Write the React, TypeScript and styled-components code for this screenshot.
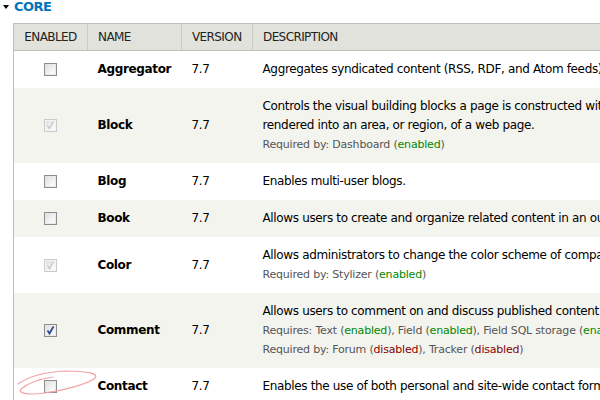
import styled, { createGlobalStyle } from "styled-components";

const GlobalStyle = createGlobalStyle`
    html, body {
        margin: 0;
        padding: 0;
        background: #fff;
        overflow: hidden;
    }
    body {
        font-family: "DejaVu Sans", Verdana, sans-serif;
        color: #000;
    }
`

type Status = "enabled" | "disabled"

interface Dep {
    name: string
    status: Status
}

interface Module {
    name: string
    version: string
    description: string
    state: "off" | "on" | "locked"
    requires?: Dep[]
    requiredBy?: Dep[]
}

const modules: Module[] = [
    { name: "Aggregator", version: "7.7", state: "off", description: "Aggregates syndicated content (RSS, RDF, and Atom feeds)." },
    {
        name: "Block", version: "7.7", state: "locked",
        description: "Controls the visual building blocks a page is constructed with. Blocks are boxes of content rendered into an area, or region, of a web page.",
        requiredBy: [{ name: "Dashboard", status: "enabled" }],
    },
    { name: "Blog", version: "7.7", state: "off", description: "Enables multi-user blogs." },
    { name: "Book", version: "7.7", state: "off", description: "Allows users to create and organize related content in an outline." },
    {
        name: "Color", version: "7.7", state: "locked",
        description: "Allows administrators to change the color scheme of compatible themes.",
        requiredBy: [{ name: "Stylizer", status: "enabled" }],
    },
    {
        name: "Comment", version: "7.7", state: "on",
        description: "Allows users to comment on and discuss published content.",
        requires: [
            { name: "Text", status: "enabled" },
            { name: "Field", status: "enabled" },
            { name: "Field SQL storage", status: "enabled" },
        ],
        requiredBy: [
            { name: "Forum", status: "disabled" },
            { name: "Tracker", status: "disabled" },
        ],
    },
    { name: "Contact", version: "7.7", state: "off", description: "Enables the use of both personal and site-wide contact forms." },
]

export default function App() {
    return (
        <>
            <GlobalStyle />
            <Page>
                <Legend>
                    <Arrow />
                    CORE
                </Legend>
                <Table>
                    <colgroup>
                        <col style={{ width: 74 }} />
                        <col style={{ width: 94 }} />
                        <col style={{ width: 71 }} />
                        <col style={{ width: 560 }} />
                    </colgroup>
                    <thead>
                        <tr>
                            <HeadCell $center>ENABLED</HeadCell>
                            <HeadCell>NAME</HeadCell>
                            <HeadCell>VERSION</HeadCell>
                            <HeadCell>DESCRIPTION</HeadCell>
                        </tr>
                    </thead>
                    <tbody>
                        {modules.map((m, i) => (
                            <Row key={m.name} $alt={i % 2 === 1}>
                                <CheckCell>
                                    <Checkbox state={m.state} />
                                </CheckCell>
                                <NameCell>{m.name}</NameCell>
                                <Cell>{m.version}</Cell>
                                <DescCell>
                                    <div>{m.description}</div>
                                    {m.requires ? <DepLine label="Requires" deps={m.requires} /> : ''}
                                    {m.requiredBy ? <DepLine label="Required by" deps={m.requiredBy} /> : ''}
                                </DescCell>
                            </Row>
                        ))}
                    </tbody>
                </Table>
                {/* hand-drawn mark around the Contact checkbox */}
                <Scribble width="120" height="40" viewBox="0 0 120 40">
                    <path
                        d="M53 17 C40 19, 28 23, 21 29 C17 34, 30 35, 45 33 C65 30, 88 24, 95 18 C99 13, 85 11, 65 11 C45 12, 28 17, 18 24"
                        fill="none"
                        stroke="#f3a3a3"
                        strokeWidth="1.2"
                        strokeLinecap="round"
                    />
                </Scribble>
            </Page>
        </>
    )
}

function Checkbox({ state }: { state: Module["state"] }) {
    return (
        <Box $locked={state === "locked"}>
            {state !== "off" ? (
                <svg width="11" height="11" viewBox="0 0 11 11">
                    <path
                        d="M2.5 5.5 L4.5 8.5 L8.5 1.5"
                        fill="none"
                        stroke={state === "on" ? "#2a4a9a" : "#c2c2c2"}
                        strokeWidth={state === "on" ? 1.8 : 1.2}
                    />
                </svg>
            ) : ''}
        </Box>
    )
}

function DepLine({ label, deps }: { label: string, deps: Dep[] }) {
    return (
        <Requirements>
            {label}:{" "}
            {deps.map((d, i) => (
                <span key={d.name}>
                    {d.name} (<State $status={d.status}>{d.status}</State>){i < deps.length - 1 ? ", " : ""}
                </span>
            ))}
        </Requirements>
    )
}

const Page = styled.div`
    position: relative;
    width: 600px;
    height: 400px;
    overflow: hidden;
`

const Legend = styled.div`
    display: flex;
    align-items: center;
    gap: 5px;
    height: 13px;
    padding-left: 3px;
    color: #0074bd;
    font-weight: bold;
    font-size: 13px;
    line-height: 13px;
    letter-spacing: -0.5px;
`

const Arrow = styled.span`
    width: 0;
    height: 0;
    border-left: 3px solid transparent;
    border-right: 3px solid transparent;
    border-top: 4px solid #000;
`

const Table = styled.table`
    margin: 10px 0 0 13px;
    width: 799px;
    table-layout: fixed;
    border-collapse: collapse;
    border-left: 1px solid #bebfb9;
    font-size: 12px;
    letter-spacing: -0.35px;
`

const HeadCell = styled.th<{ $center?: boolean }>`
    height: 26px;
    padding: 0 10px;
    background: #e1e2dc;
    border-top: 1px solid #bebfb9;
    border-bottom: 1px solid #bebfb9;
    border-left: 1px solid #c9cac4;
    text-align: ${p => p.$center ? "center" : "left"};
    font-weight: normal;
    color: #222;
    letter-spacing: -0.6px;
    white-space: nowrap;
    &:first-child {
        border-left: none;
    }
`

const Row = styled.tr<{ $alt: boolean }>`
    background: ${p => p.$alt ? "#f3f4ee" : "#fff"};
`

const Cell = styled.td`
    padding: 9px 10px;
    vertical-align: middle;
    line-height: 19px;
    color: #000;
`

const CheckCell = styled(Cell)`
    text-align: center;
    padding: 0;
`

const NameCell = styled(Cell)`
    font-weight: bold;
`

const DescCell = styled(Cell)`
    padding-right: 0;
`

const Requirements = styled.div`
    font-size: 11px;
    color: #555;
    letter-spacing: -0.2px;
    white-space: nowrap;
`

const State = styled.span<{ $status: Status }>`
    color: ${p => p.$status === "enabled" ? "#080" : "#800"};
`

const Box = styled.span<{ $locked: boolean }>`
    display: inline-flex;
    align-items: center;
    justify-content: center;
    box-sizing: border-box;
    width: 13px;
    height: 13px;
    vertical-align: middle;
    border: 1px solid ${p => p.$locked ? "#cacaca" : "#8d8d8d"};
    background: linear-gradient(135deg, #dcdcdc 0%, #f4f4f4 60%, #fff 100%);
    box-shadow: inset 0 0 0 1px ${p => p.$locked ? "#f4f4f4" : "#e8e8e8"};
`

const Scribble = styled.svg`
    position: absolute;
    left: 0;
    top: 360px;
    pointer-events: none;
`
